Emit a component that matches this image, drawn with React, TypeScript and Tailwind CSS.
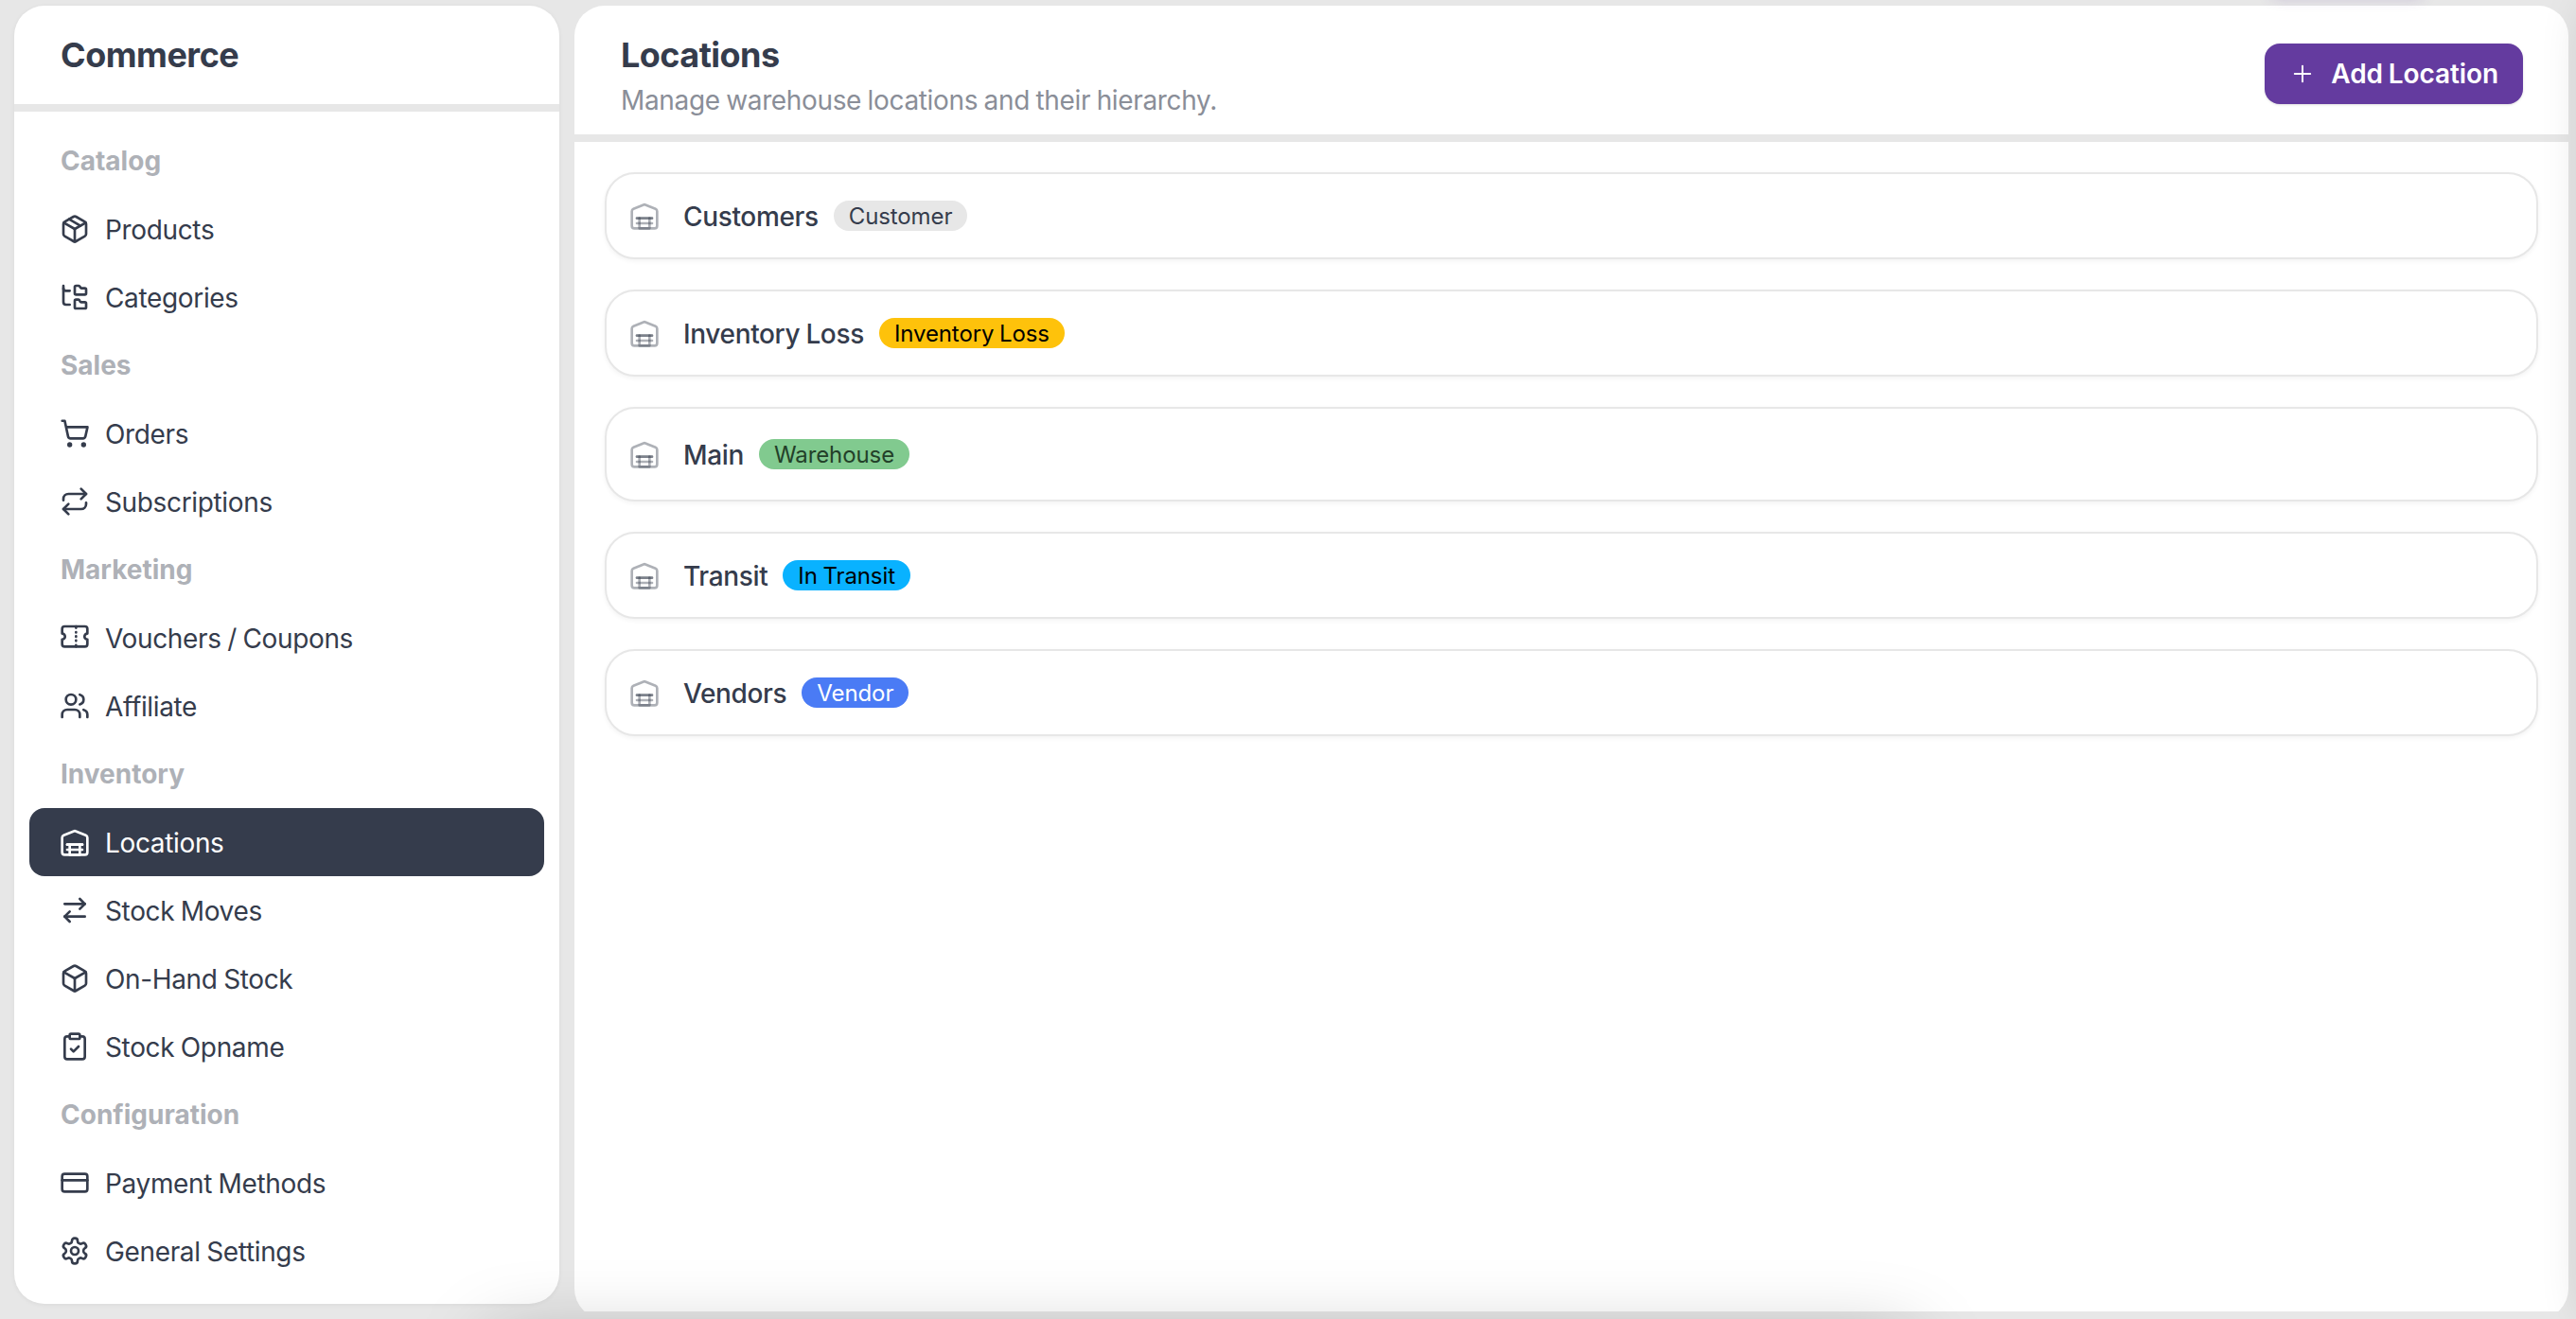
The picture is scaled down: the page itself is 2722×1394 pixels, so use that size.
import React from 'react';
import {
  ArrowRightLeft,
  Box,
  ClipboardCheck,
  CreditCard,
  FolderTree,
  Package,
  Plus,
  Repeat,
  ShoppingCart,
  Users,
} from 'lucide-react';

type IconType = React.ComponentType<{ className?: string }>;

interface MenuItem {
  label: string;
  icon: IconType;
  active?: boolean;
}

interface MenuSection {
  title: string;
  items: MenuItem[];
}

interface Location {
  name: string;
  type: string;
  badge: string;
  row: string;
}

const Svg = ({ className, children }: { className?: string; children: React.ReactNode }) => (
  <svg
    className={className}
    viewBox="0 0 24 24"
    fill="none"
    stroke="currentColor"
    strokeWidth={2}
    strokeLinecap="round"
    strokeLinejoin="round"
  >
    {children}
  </svg>
);

const WarehouseIcon: IconType = ({ className }) => (
  <Svg className={className}>
    <path d="M22 8.35V20a2 2 0 0 1-2 2H4a2 2 0 0 1-2-2V8.35A2 2 0 0 1 3.26 6.5l8-3.2a2 2 0 0 1 1.48 0l8 3.2A2 2 0 0 1 22 8.35Z" />
    <path d="M6 14h12" />
    <path d="M6 14h12" />
    <path d="M6 18h12" />
    <path d="M8 14v8h8v-8" />
  </Svg>
);

const TicketIcon: IconType = ({ className }) => (
  <Svg className={className}>
    <path d="M2 8.7a2.3 2.3 0 0 1 0 4.6V17a2 2 0 0 0 2 2h16a2 2 0 0 0 2-2v-3.7a2.3 2.3 0 0 1 0-4.6V5a2 2 0 0 0-2-2H4a2 2 0 0 0-2 2Z" />
    <path d="M13 3v1.2M13 7.5v.4M13 10.8v.4M13 14.1v.4M13 17.8V19" />
  </Svg>
);

const GearIcon: IconType = ({ className }) => (
  <Svg className={className}>
    <path d="M12.22 2h-.44a2 2 0 0 0-2 2v.18a2 2 0 0 1-1 1.73l-.43.25a2 2 0 0 1-2 0l-.15-.08a2 2 0 0 0-2.73.73l-.22.38a2 2 0 0 0 .73 2.73l.15.1a2 2 0 0 1 1 1.72v.51a2 2 0 0 1-1 1.74l-.15.09a2 2 0 0 0-.73 2.73l.22.38a2 2 0 0 0 2.73.73l.15-.08a2 2 0 0 1 2 0l.43.25a2 2 0 0 1 1 1.73V20a2 2 0 0 0 2 2h.44a2 2 0 0 0 2-2v-.18a2 2 0 0 1 1-1.73l.43-.25a2 2 0 0 1 2 0l.15.08a2 2 0 0 0 2.73-.73l.22-.39a2 2 0 0 0-.73-2.73l-.15-.08a2 2 0 0 1-1-1.74v-.5a2 2 0 0 1 1-1.74l.15-.09a2 2 0 0 0 .73-2.73l-.22-.38a2 2 0 0 0-2.73-.73l-.15.08a2 2 0 0 1-2 0l-.43-.25a2 2 0 0 1-1-1.73V4a2 2 0 0 0-2-2z" />
    <circle cx="12" cy="12" r="3" />
  </Svg>
);

const sections: MenuSection[] = [
  {
    title: 'Catalog',
    items: [
      { label: 'Products', icon: Package },
      { label: 'Categories', icon: FolderTree },
    ],
  },
  {
    title: 'Sales',
    items: [
      { label: 'Orders', icon: ShoppingCart },
      { label: 'Subscriptions', icon: Repeat },
    ],
  },
  {
    title: 'Marketing',
    items: [
      { label: 'Vouchers / Coupons', icon: TicketIcon },
      { label: 'Affiliate', icon: Users },
    ],
  },
  {
    title: 'Inventory',
    items: [
      { label: 'Locations', icon: WarehouseIcon, active: true },
      { label: 'Stock Moves', icon: ArrowRightLeft },
      { label: 'On-Hand Stock', icon: Box },
      { label: 'Stock Opname', icon: ClipboardCheck },
    ],
  },
  {
    title: 'Configuration',
    items: [
      { label: 'Payment Methods', icon: CreditCard },
      { label: 'General Settings', icon: GearIcon },
    ],
  },
];

const locations: Location[] = [
  { name: 'Customers', type: 'Customer', badge: 'bg-[#e7e7e7] text-[#353c4c]', row: 'h-[92px]' },
  { name: 'Inventory Loss', type: 'Inventory Loss', badge: 'bg-[#fec20b] text-black', row: 'h-[92px]' },
  { name: 'Main', type: 'Warehouse', badge: 'bg-[#81ca8f] text-[#234029]', row: 'h-[100px]' },
  { name: 'Transit', type: 'In Transit', badge: 'bg-[#09b2ff] text-black', row: 'h-[92px]' },
  { name: 'Vendors', type: 'Vendor', badge: 'bg-[#4a7bf5] text-white', row: 'h-[92px]' },
];

const Sidebar = () => (
  <aside className="flex h-[1372px] w-[576px] shrink-0 flex-col overflow-hidden rounded-[32px] bg-white shadow-[0_1px_5px_rgba(0,0,0,0.06)]">
    <div className="h-28 border-b-8 border-[#e7e7e7] px-[49px] pt-8">
      <h2 className="text-[36px] leading-10 font-bold tracking-[-0.5px]">Commerce</h2>
    </div>
    <nav className="flex flex-col p-4">
      {sections.map((section) => (
        <div key={section.title}>
          <div className="flex h-18 items-center pl-[33px] font-bold text-[#aeb1b7]">{section.title}</div>
          {section.items.map(({ label, icon: Icon, active }) => (
            <a
              key={label}
              className={`flex h-18 items-center gap-4 rounded-2xl px-8 ${active ? 'bg-[#353c4c] text-white' : ''}`}
            >
              <Icon className="h-8 w-8" />
              <span className="pt-px tracking-[-0.35px] [word-spacing:-1px]">{label}</span>
            </a>
          ))}
        </div>
      ))}
    </nav>
  </aside>
);

const LocationRow = ({ location }: { location: Location }) => (
  <div
    className={`flex items-center rounded-[32px] border-2 border-[#e7e7e7] bg-white px-6 shadow-[0_2px_5px_rgba(0,0,0,0.05)] ${location.row}`}
  >
    <WarehouseIcon className="h-8 w-8 text-[#353c4c]/40" />
    <span className="ml-6 pt-px pl-px font-medium tracking-[-0.35px] [word-spacing:-1px]">{location.name}</span>
    <span
      className={`ml-4 flex h-8 items-center rounded-full px-4 pt-px text-2xl tracking-[-0.1px] [word-spacing:-1px] ${location.badge}`}
    >
      {location.type}
    </span>
  </div>
);

export default function App() {
  return (
    <div className="relative flex h-[1394px] w-[2722px] gap-4 overflow-hidden bg-[#e7e7e7] pt-1.5 pr-2 pl-[15px] font-['Inter',sans-serif] text-[28px] leading-10 text-[#353c4c]">
      <Sidebar />

      {/* Main panel, its bottom edge is cut off by the frame */}
      <div className="h-[1380px] flex-1 overflow-hidden">
        <main className="h-[1388px] overflow-hidden rounded-[32px] bg-white">
          <header className="flex h-36 items-start justify-between border-b-8 border-[#e7e7e7] px-12 pt-8">
            <div className="pl-px">
              <h1 className="text-[36px] leading-10 font-bold tracking-[-0.55px]">Locations</h1>
              <p className="mt-2 tracking-[-0.35px] text-[#8a8e98] [word-spacing:-1px]">
                Manage warehouse locations and their hierarchy.
              </p>
            </div>
            <button
              type="button"
              className="mt-2 flex h-16 items-center gap-4 rounded-2xl bg-[#643b9f] px-[26px] font-semibold tracking-[-0.1px] text-white shadow-sm [word-spacing:-1px]"
            >
              <Plus className="h-7 w-7" strokeWidth={1.7} />
              Add Location
            </button>
          </header>
          <div className="flex flex-col gap-8 p-8">
            {locations.map((location) => (
              <LocationRow key={location.name} location={location} />
            ))}
          </div>
        </main>
      </div>

      {/* Soft shadows cast in from the surrounding window */}
      <div className="pointer-events-none absolute top-[1415px] left-[520px] h-60 w-[1500px] shadow-[0_0_80px_rgba(0,0,0,0.25)]" />
      <div className="pointer-events-none absolute top-2.5 left-[2740px] h-[1380px] w-40 shadow-[0_0_50px_rgba(0,0,0,0.2)]" />
      <div className="pointer-events-none absolute -top-5 left-[2400px] h-4 w-40 rounded-lg shadow-[0_0_16px_rgba(100,59,159,0.3)]" />
    </div>
  );
}
